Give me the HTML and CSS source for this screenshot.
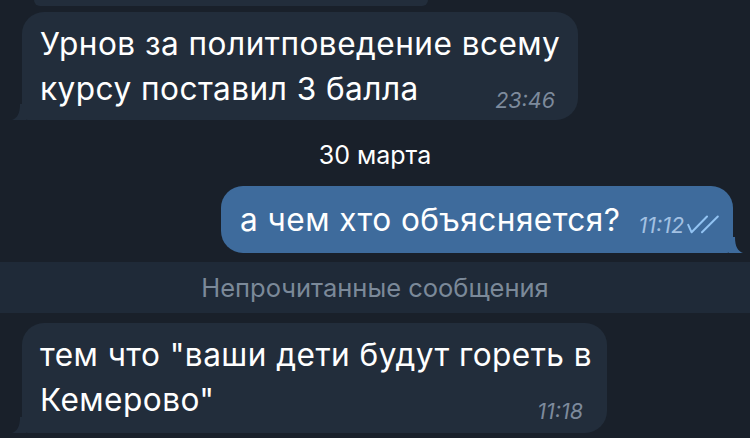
FILE: index.html
```html
<!DOCTYPE html>
<html lang="ru">
<head>
<meta charset="utf-8">
<link rel="stylesheet" href="styles.css">
</head>
<body>
<div class="chat">
  <div class="prev"></div>

  <div class="row in first">
    <div class="bubble in-bubble b1">
      <svg class="tail tail-in" width="16" height="16" viewBox="0 0 16 16"><path d="M16 0 V16 H2 C7 14 10 10 10 0 Z" fill="#222d3b"/></svg>
      <div class="text">Урнов за политповедение всему<br>курсу поставил 3 балла</div>
      <div class="time">23:46</div>
    </div>
  </div>

  <div class="date">30 марта</div>

  <div class="row out">
    <div class="bubble out-bubble">
      <svg class="tail tail-out" width="16" height="16" viewBox="0 0 16 16"><path d="M0 0 V16 H14 C9 14 6 10 6 0 Z" fill="#3e6b9c"/></svg>
      <div class="text">а чем хто объясняется?</div>
      <div class="meta">
        <span class="time out-time">11:12</span>
        <svg class="checks" width="32" height="19" viewBox="0 0 32 19"><path d="M1.2 9.8 L4.6 17.3 L20 1.5 M15 17.3 L30.8 1.5" fill="none" stroke="#92c3f2" stroke-width="2" stroke-linecap="round" stroke-linejoin="round"/></svg>
      </div>
    </div>
  </div>

  <div class="unread">Непрочитанные сообщения</div>

  <div class="row in">
    <div class="bubble in-bubble b3">
      <svg class="tail tail-in" width="16" height="16" viewBox="0 0 16 16"><path d="M16 0 V16 H2 C7 14 10 10 10 0 Z" fill="#222d3b"/></svg>
      <div class="text">тем что "ваши дети будут гореть в<br>Кемерово"</div>
      <div class="time">11:18</div>
    </div>
  </div>
</div>
</body>
</html>
```

FILE: styles.css
```css
html, body {
  margin: 0;
  padding: 0;
}
body {
  width: 750px;
  height: 438px;
  overflow: hidden;
  background: #19202a;
  font-family: "Inter", "Roboto", "Liberation Sans", sans-serif;
  color: #ffffff;
}
.chat {
  display: flex;
  flex-direction: column;
}
.prev {
  margin-left: 34px;
  width: 394px;
  height: 6px;
  background: #222d3b;
  border-radius: 0 0 18px 18px;
}
.row {
  display: flex;
}
.row.in {
  justify-content: flex-start;
  padding-left: 22px;
}
.row.out {
  justify-content: flex-end;
  padding-right: 17px;
}
.row.first {
  margin-top: 6px;
}
.bubble {
  position: relative;
  border-radius: 22px;
}
.in-bubble {
  background: #222d3b;
  display: grid;
  grid-template-columns: minmax(0, 1fr);
  border-bottom-left-radius: 6px;
}
.in-bubble .text,
.in-bubble .time {
  grid-area: 1 / 1;
}
.b1 {
  width: 556px;
  height: 108px;
  box-sizing: border-box;
  padding: 9px 23px 11px 18px;
}
.b3 {
  width: 585px;
  height: 110px;
  box-sizing: border-box;
  padding: 9px 24px 11px 18px;
}
.text {
  font-size: 31.6px;
  line-height: 45px;
  letter-spacing: 0.45px;
  white-space: nowrap;
}
.time {
  justify-self: end;
  align-self: end;
  font-size: 21.5px;
  line-height: 22px;
  font-style: italic;
  color: #7d8a9c;
  white-space: nowrap;
}
.tail {
  position: absolute;
  bottom: 0;
}
.tail-in {
  left: -12px;
}
.tail-out {
  right: -12px;
}
.date {
  text-align: center;
  font-size: 25px;
  line-height: 28px;
  margin: 21px 0 17px;
}
.out-bubble {
  background: #3e6b9c;
  height: 67px;
  box-sizing: border-box;
  padding: 0 14px 0 19px;
  display: flex;
  align-items: center;
  border-bottom-right-radius: 6px;
}
.out-bubble .text {
  line-height: 40px;
}
.meta {
  display: flex;
  align-items: center;
  margin-left: 18px;
  margin-top: 10px;
  gap: 3px;
}
.out-time {
  color: #a3c1e2;
}
.checks {
  display: block;
}
.unread {
  margin-top: 9px;
  height: 51px;
  line-height: 51px;
  background: #1f2a38;
  text-align: center;
  color: #7b8999;
  font-size: 25.5px;
}
.row.in:last-child {
  margin-top: 10px;
}
```
